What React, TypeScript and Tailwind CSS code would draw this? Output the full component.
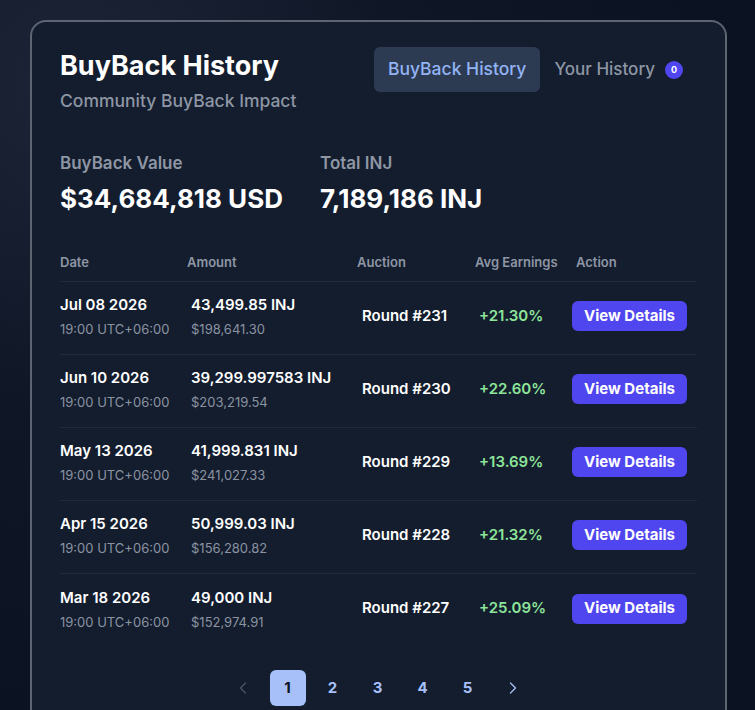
import { ChevronLeft, ChevronRight } from "lucide-react";

interface HistoryRow {
  date: string;
  time: string;
  amount: string;
  usd: string;
  round: string;
  earnings: string;
}

const ROWS: HistoryRow[] = [
  { date: "Jul 08 2026", time: "19:00 UTC+06:00", amount: "43,499.85 INJ", usd: "$198,641.30", round: "Round #231", earnings: "+21.30%" },
  { date: "Jun 10 2026", time: "19:00 UTC+06:00", amount: "39,299.997583 INJ", usd: "$203,219.54", round: "Round #230", earnings: "+22.60%" },
  { date: "May 13 2026", time: "19:00 UTC+06:00", amount: "41,999.831 INJ", usd: "$241,027.33", round: "Round #229", earnings: "+13.69%" },
  { date: "Apr 15 2026", time: "19:00 UTC+06:00", amount: "50,999.03 INJ", usd: "$156,280.82", round: "Round #228", earnings: "+21.32%" },
  { date: "Mar 18 2026", time: "19:00 UTC+06:00", amount: "49,000 INJ", usd: "$152,974.91", round: "Round #227", earnings: "+25.09%" },
];

const COLS = "grid grid-cols-[127px_170px_118px_101px_1fr]";

const Row = ({ row, last }: { row: HistoryRow; last: boolean }) => (
  <div className={`${COLS} items-center h-[73px] ${last ? "" : "border-b border-[#1f2a3b]"}`}>
    <div className="-mt-[2px]">
      <div className="text-[15px] leading-5 font-semibold text-white">{row.date}</div>
      <div className="mt-1 text-[13px] leading-5 text-[#8b93a1]">{row.time}</div>
    </div>
    <div className="pl-1 -mt-[2px]">
      <div className="text-[15px] leading-5 font-semibold text-white whitespace-nowrap">{row.amount}</div>
      <div className="mt-1 text-[13px] leading-5 text-[#8b93a1]">{row.usd}</div>
    </div>
    <div className="pl-[5px] -mt-1 text-[15px] font-semibold text-white">{row.round}</div>
    <div className="pl-1 -mt-1 text-[15px] font-semibold text-[#8ee59a]">{row.earnings}</div>
    <div className="-ml-1 -mt-1">
      <button className="h-[30px] w-[115px] rounded-md bg-[#5046f0] text-[15px] font-bold text-white">
        View Details
      </button>
    </div>
  </div>
);

export default function App() {
  return (
    <div
      className="min-h-[710px] w-full bg-[#0c1322] pt-5 pl-[30px] overflow-hidden"
      style={{ fontFamily: "Inter, 'Noto Sans', sans-serif" }}
    >
      <div className="pointer-events-none fixed inset-0 bg-[radial-gradient(circle_at_10%_12%,#1c2436_0%,#0f1727_35%,#0b1221_70%)]" />
      <div className="relative w-[697px] min-h-[720px] rounded-[16px] border-2 border-[#5d6573] bg-[#131d2e] pt-[28px] pl-[28px] pr-[28px]">
        <div className="flex justify-between">
          <div>
            <h1 className="text-[27px] leading-8 font-bold text-white">BuyBack History</h1>
            <p className="mt-[7px] text-[17.5px] leading-6 font-medium text-[#8e96a4]">Community BuyBack Impact</p>
          </div>
          <div className="flex items-center h-[45px] -mt-[3px] mr-[14px]">
            <div className="h-[45px] px-[14px] flex items-center rounded-md bg-[#2c3b52] text-[17.5px] font-medium text-[#93b4f5]">
              BuyBack History
            </div>
            <div className="ml-[14px] flex items-center text-[17px] font-medium text-[#8e96a4]">
              Your History
              <span className="ml-[10px] flex h-[18px] w-[18px] items-center justify-center rounded-full bg-[#5046f0] text-[9px] font-bold text-white">
                0
              </span>
            </div>
          </div>
        </div>

        <div className="mt-[38px] flex">
          <div className="w-[260px]">
            <div className="text-[17px] leading-6 font-semibold text-[#8e96a4]">BuyBack Value</div>
            <div className="mt-2 text-[26px] leading-8 font-bold text-white">$34,684,818 USD</div>
          </div>
          <div>
            <div className="text-[17px] leading-6 font-semibold text-[#8e96a4]">Total INJ</div>
            <div className="mt-2 text-[26px] leading-8 font-bold text-white">7,189,186 INJ</div>
          </div>
        </div>

        <div className={`${COLS} mt-[37px] pb-[9px] border-b border-[#1f2a3b] text-[13px] leading-5 font-semibold text-[#8e96a4]`}>
          <div>Date</div>
          <div>Amount</div>
          <div>Auction</div>
          <div>Avg Earnings</div>
          <div>Action</div>
        </div>

        {ROWS.map((row, i) => (
          <Row key={i} row={row} last={i === ROWS.length - 1} />
        ))}

        <div className="mt-[23px] flex items-center justify-center gap-[9px] pr-[2px]">
          <button className="flex h-9 w-9 items-center justify-center text-[#4b5565]">
            <ChevronLeft className="h-5 w-5" strokeWidth={1.5} />
          </button>
          {[1, 2, 3, 4, 5].map((p) => (
            <button
              key={p}
              className={`flex h-9 w-9 items-center justify-center rounded-md text-[15px] font-bold ${
                p === 1 ? "bg-[#a8c0fa] text-[#0c1322]" : "text-[#a8c0fa]"
              }`}
            >
              {p}
            </button>
          ))}
          <button className="flex h-9 w-9 items-center justify-center text-[#a8c0fa]">
            <ChevronRight className="h-5 w-5" strokeWidth={1.5} />
          </button>
        </div>
      </div>
    </div>
  );
}
